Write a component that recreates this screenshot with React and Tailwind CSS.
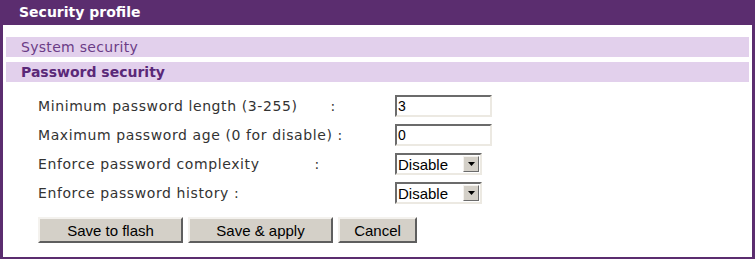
import React from 'react';

const rows = [
  { label: 'Minimum password length (3-255)', gap: 'ml-[33px]', type: 'text', value: '3' },
  { label: 'Maximum password age (0 for disable)', gap: 'ml-[5px]', type: 'text', value: '0' },
  { label: 'Enforce password complexity', gap: 'ml-[55px]', type: 'select', value: 'Disable' },
  { label: 'Enforce password history', gap: 'ml-[5px]', type: 'select', value: 'Disable' },
];

function TextBox({ value }) {
  return (
    <div className="w-[97px] h-[22px] bg-white border-2 border-t-[#6b6b6b] border-l-[#6b6b6b] border-b-[#ece9e2] border-r-[#ece9e2] flex items-center pl-[1px] text-[14px] leading-none text-black font-['Liberation_Sans',sans-serif]">
      {value}
    </div>
  );
}

function SelectBox({ value }) {
  return (
    <div className="w-[87px] h-[22px] bg-white border-2 border-t-[#6b6b6b] border-l-[#6b6b6b] border-b-[#ece9e2] border-r-[#ece9e2] flex items-center text-[15px] leading-none text-black font-['Liberation_Sans',sans-serif]">
      <span className="flex-1 pl-[1px]">{value}</span>
      <span className="w-[16px] h-[16px] mr-[1px] bg-[#d4d0c8] border border-t-[#f4f2ee] border-l-[#f4f2ee] border-b-[#6b6b6b] border-r-[#6b6b6b] flex items-center justify-center">
        <svg width="7" height="4" viewBox="0 0 7 4">
          <path d="M0 0h7L3.5 4z" fill="#000" />
        </svg>
      </span>
    </div>
  );
}

function Button({ children, w }) {
  return (
    <button className={`${w} h-[26px] bg-[#d4d0c8] border-2 border-t-[#f4f2ee] border-l-[#f4f2ee] border-b-[#5e5e5e] border-r-[#5e5e5e] text-[15px] text-black font-['Liberation_Sans',sans-serif] leading-none`}>
      {children}
    </button>
  );
}

export default function App() {
  return (
    <div className="w-[755px] h-[259px] bg-white border-l-[3px] border-r-[3px] border-b-2 border-[#5b2d6f] flex flex-col font-['DejaVu_Sans',sans-serif]">
      <div className="h-[25px] bg-[#5b2d6f] text-white font-bold text-[14px] flex items-center pl-[16px]">
        Security profile
      </div>
      <div className="px-[3px] pt-[12px] flex flex-col gap-[5px]">
        <div className="h-[20px] bg-[#e2d0ec] text-[#6b3c86] text-[14px] tracking-[0.3px] flex items-center pl-[15px]">
          System security
        </div>
        <div className="h-[20px] bg-[#e2d0ec] text-[#5a2878] font-bold text-[14px] flex items-center pl-[15px]">
          Password security
        </div>
      </div>
      <div className="pl-[35px] pt-[13px] flex flex-col gap-[7px]">
        {rows.map((r) => (
          <div key={r.label} className="flex items-center h-[22px]">
            <div className="w-[357px] flex text-[14px] tracking-[0.6px] text-[#333333]">
              <span>{r.label}</span>
              <span className={r.gap}>:</span>
            </div>
            {r.type === 'text' ? <TextBox value={r.value} /> : <SelectBox value={r.value} />}
          </div>
        ))}
      </div>
      <div className="pl-[35px] pt-[13px] flex gap-[5px]">
        <Button w="w-[145px]">Save to flash</Button>
        <Button w="w-[145px]">Save &amp; apply</Button>
        <Button w="w-[79px]">Cancel</Button>
      </div>
    </div>
  );
}
